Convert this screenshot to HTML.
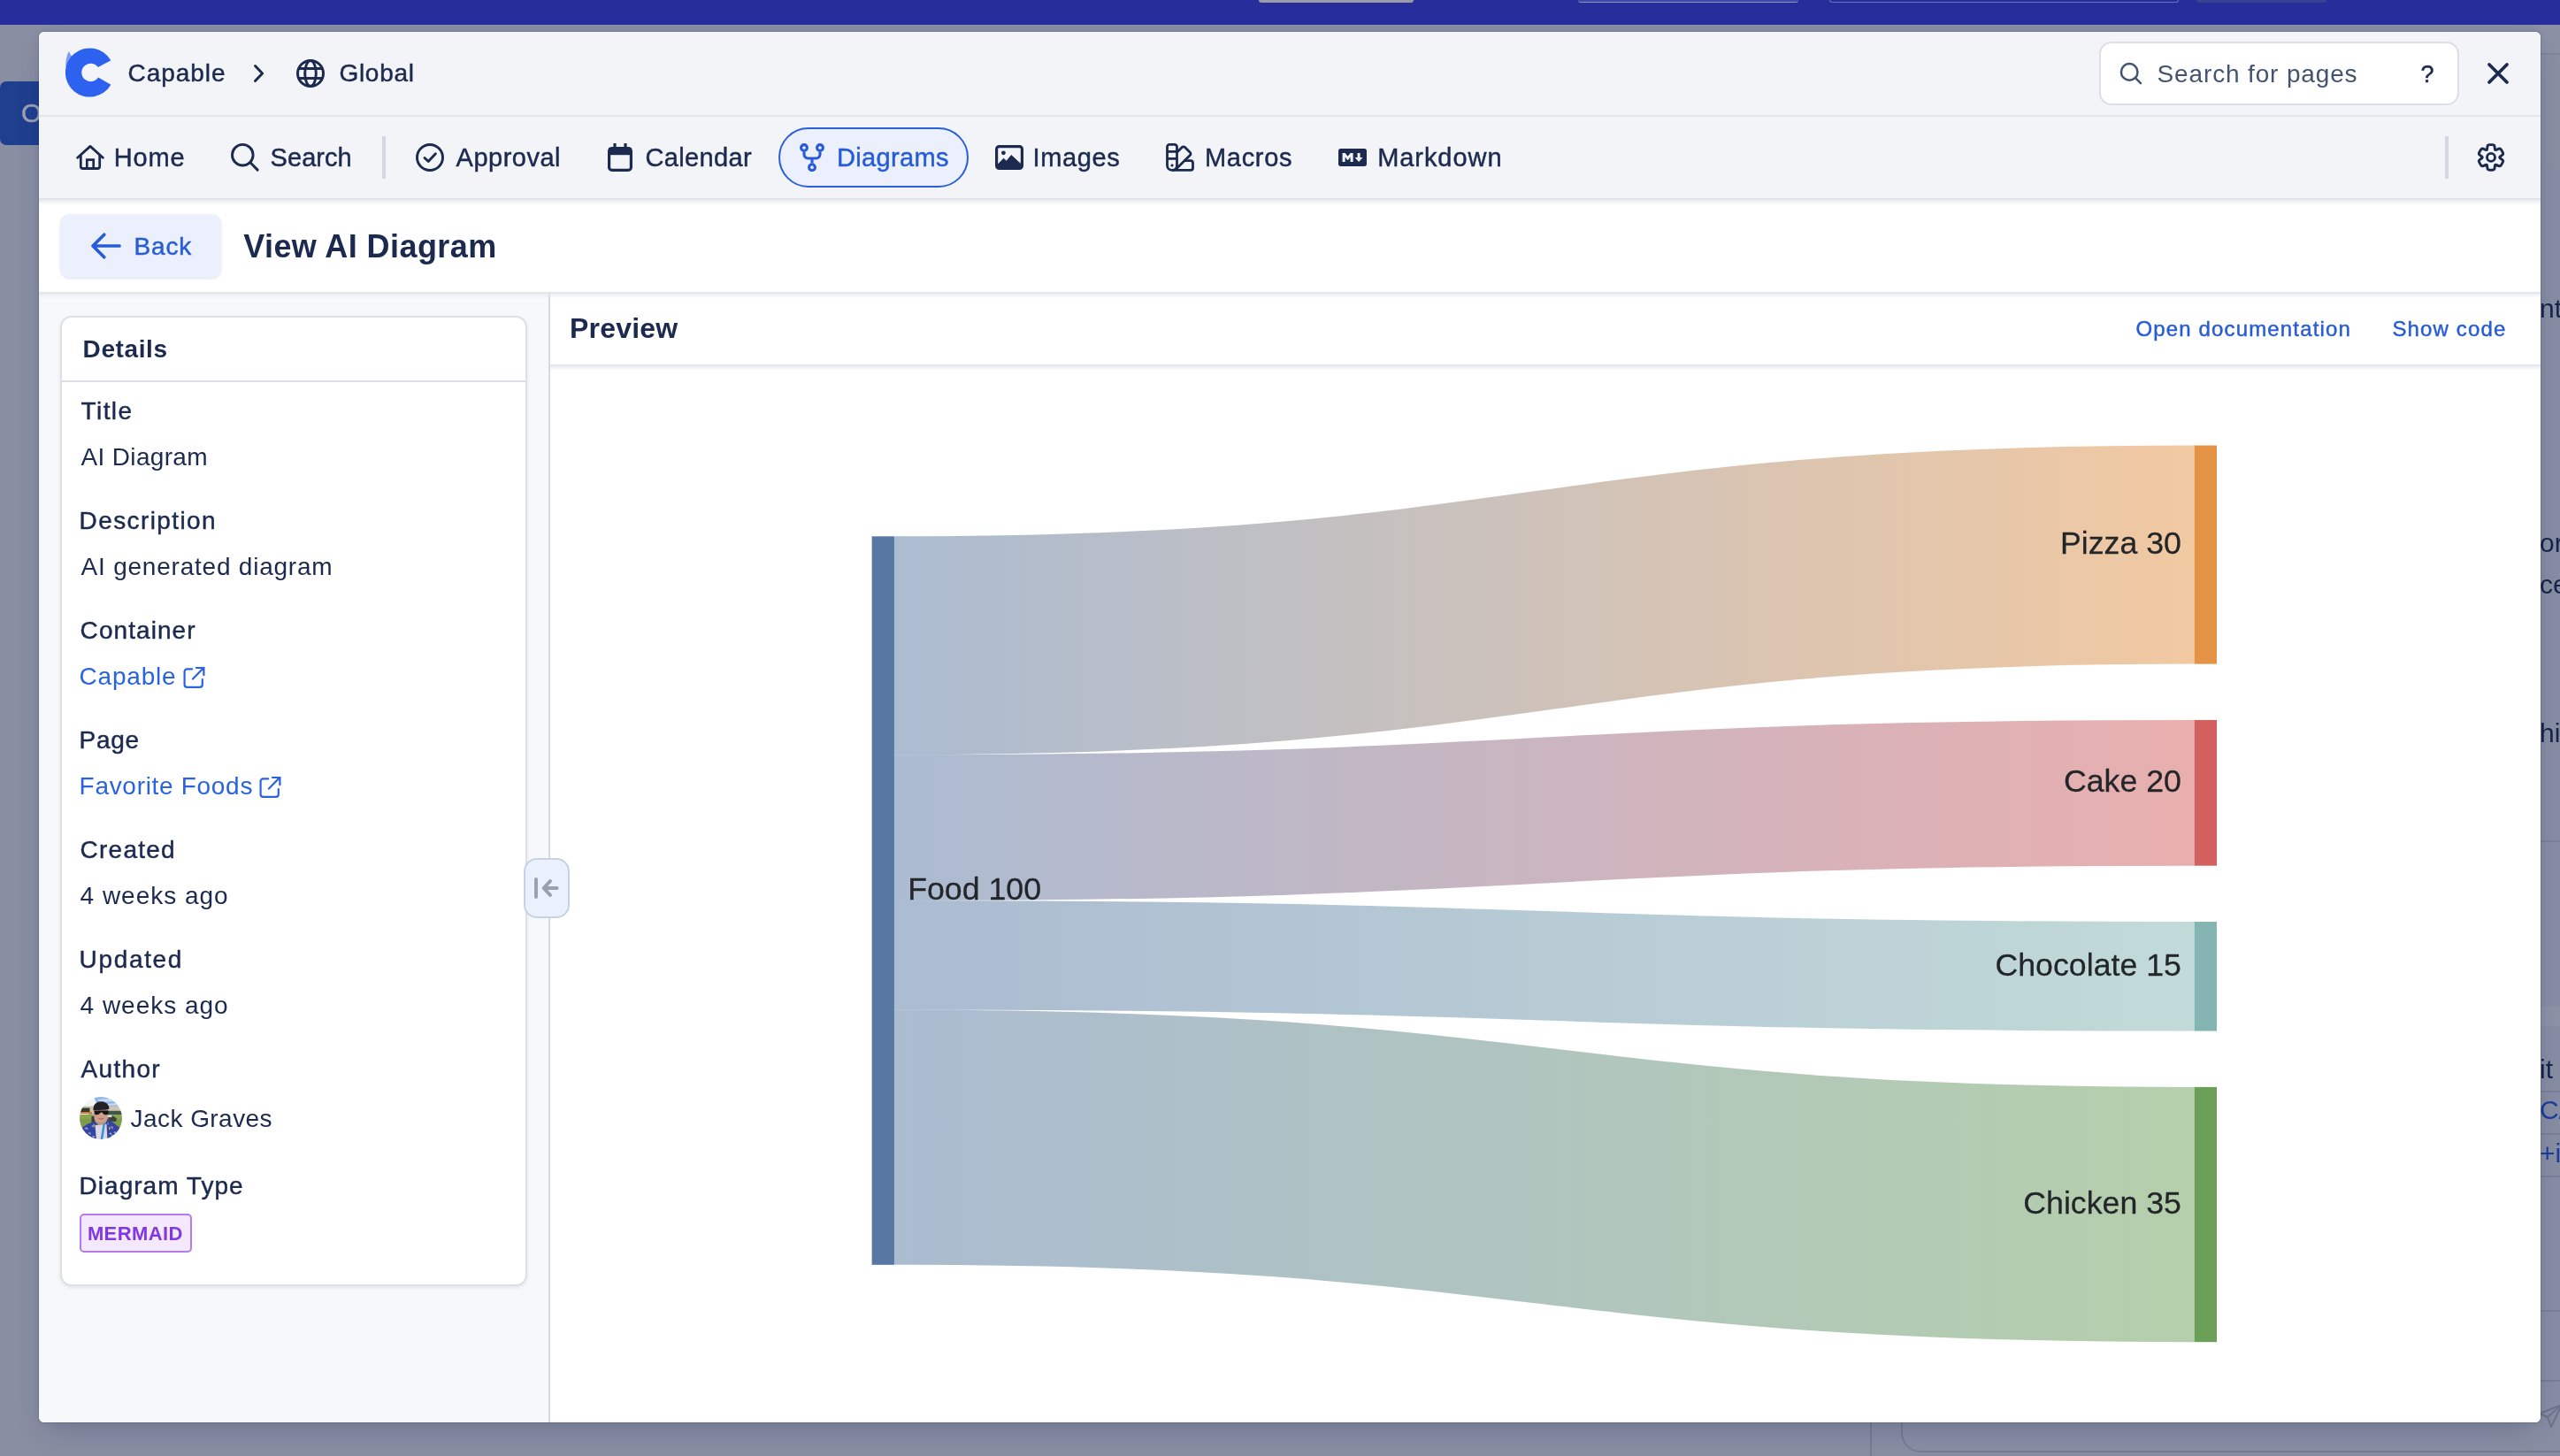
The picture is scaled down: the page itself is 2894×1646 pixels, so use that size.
<!DOCTYPE html><html lang="en"><head><meta charset="utf-8"><title>View AI Diagram</title><style>
*{box-sizing:border-box}
html,body{margin:0;padding:0}
body{width:2894px;height:1646px;background:#898ea3;font-family:'Liberation Sans', sans-serif;}
#root{position:relative;width:2894px;height:1646px;overflow:hidden;background:#898ea3}
.abs{position:absolute}
.t{position:absolute;white-space:pre;font-family:'Liberation Sans', sans-serif;margin:0;padding:0;text-decoration:none;display:block}
.i{position:absolute;display:block}
svg text{font-family:'Liberation Sans', sans-serif;}
#stage{position:absolute;left:-44px;top:-36px;width:2894px;height:1646px}
#modal{position:absolute;left:44px;top:36px;width:2828px;height:1572px;background:#fff;border-radius:6px;overflow:hidden;}
#modalshadow{position:absolute;left:44px;top:36px;width:2828px;height:1572px;border-radius:6px;box-shadow:0 0 0 1px rgba(9,30,66,.12),0 16px 32px -8px rgba(9,30,66,.2),0 0 10px rgba(9,30,66,.07);}
</style></head><body><div id="root">
<div class="abs" style="left:0px;top:0px;width:2894px;height:27.5px;background:#272e9b"></div>
<div class="abs" style="left:1423px;top:0px;width:175px;height:3px;background:#9b9ca8;border-radius:0 0 4px 4px"></div>
<div class="abs" style="left:1784px;top:0px;width:249px;height:3px;background:#3b4aa6;border-bottom:1px solid #8e93bd;border-radius:0 0 4px 4px"></div>
<div class="abs" style="left:2068px;top:0px;width:395px;height:3px;border:1px solid #6a70bb;border-top:0;border-radius:0 0 5px 5px"></div>
<div class="abs" style="left:2483px;top:0px;width:147px;height:3px;background:#3a4391;border-radius:0 0 4px 4px"></div>
<div class="abs" style="left:0px;top:92px;width:60px;height:72px;background:#1f3f8f;border-radius:7px 0 0 7px"></div>
<span class="t" style="left:24px;top:111px;font-size:30px;line-height:34px;color:#9ca1b6;-webkit-text-stroke:0.5px #9ca1b6">Or</span>
<div class="abs" style="left:2872px;top:27.5px;width:22px;height:33px;background:#8b90a5"></div>
<div class="abs" style="left:2872px;top:60px;width:22px;height:2px;background:#80869c"></div>
<div class="abs" style="left:2872px;top:190px;width:22px;height:1456px;background:#878da3"></div>
<span class="t" style="left:2871px;top:332px;font-size:30px;line-height:34px;color:#16254a">nt</span>
<span class="t" style="left:2871px;top:597px;font-size:30px;line-height:34px;color:#16254a">or</span>
<span class="t" style="left:2871px;top:644px;font-size:30px;line-height:34px;color:#16254a">ce</span>
<span class="t" style="left:2871px;top:812px;font-size:30px;line-height:34px;color:#16254a">hi</span>
<span class="t" style="left:2871px;top:1192px;font-size:30px;line-height:34px;color:#16254a">it</span>
<span class="t" style="left:2871px;top:1238px;font-size:30px;line-height:34px;color:#1d3d9a">C/</span>
<span class="t" style="left:2871px;top:1287px;font-size:30px;line-height:34px;color:#1d3d9a">+i</span>
<div class="abs" style="left:2872px;top:1137px;width:22px;height:23px;background:#8d92a7"></div>
<div class="abs" style="left:2872px;top:950px;width:22px;height:2px;background:#7b8198"></div>
<div class="abs" style="left:2872px;top:1233px;width:22px;height:2px;background:#7b8198"></div>
<div class="abs" style="left:2872px;top:1281px;width:22px;height:2px;background:#7b8198"></div>
<div class="abs" style="left:2872px;top:1329px;width:22px;height:2px;background:#7b8198"></div>
<div class="abs" style="left:2872px;top:1481px;width:22px;height:2px;background:#7b8198"></div>
<div class="abs" style="left:2114px;top:1600px;width:2px;height:46px;background:#767d95"></div>
<div class="abs" style="left:2149px;top:1560px;width:860px;height:82px;border:2px solid #767d95;border-radius:22px"></div>
<svg class="i" style="left:2868px;top:1586px" width="30" height="30" viewBox="0 0 30 30"><path d="M28,2 L3,12 L12,16 L16,27 Z M12,16 L28,2" fill="none" stroke="#6d748c" stroke-width="2" stroke-linejoin="round"/></svg>
<div id="modalshadow"></div>
<div id="modal"><div id="stage">
<div class="abs" style="left:44px;top:36px;width:2828px;height:189px;background:#f3f4f7"></div>
<div class="abs" style="left:44px;top:130px;width:2828px;height:2px;background:#e3e5ea"></div>
<div class="abs" style="left:44px;top:224px;width:2828px;height:2px;background:#e1e3e9"></div>
<div class="abs" style="left:44px;top:226px;width:2828px;height:104px;background:#fff;box-shadow:0 1px 0 0 #e3e5ea,0 3px 5px 0 rgba(9,30,66,.08)"></div>
<div class="abs" style="left:44px;top:330px;width:576px;height:1278px;background:#f7f8fa"></div>
<div class="abs" style="left:620px;top:330px;width:2px;height:1278px;background:#d6d9e2"></div>
<svg class="i" style="left:73.8px;top:53.6px" width="56" height="56" viewBox="0 0 56 56" ><path d="M0.2,21.5 C0.2,14 1.5,8 3.8,4 C6,8.5 10,13.5 14.5,17 C8,17.5 3,19 0.2,21.5 Z" fill="#7f9df6"/><path d="M51.40,14.20 A27.6,27.6 0 1 0 51.40,41.80 L37.03,33.50 A10.2,10.2 0 1 1 36.74,22.03 Z" fill="#2d62f0"/></svg>
<span class="t" style="left:144.60px;top:68.65px;font-size:28px;line-height:28px;letter-spacing:0.948px;color:#1b2a4e;font-weight:400;-webkit-text-stroke:0.45px currentColor;">Capable</span>
<svg class="i" style="left:284px;top:70px" width="18" height="26" viewBox="0 0 18 26" ><path d="M4.5,4.5 L12.6,13 L4.5,21.5" fill="none" stroke="#1b2a4e" stroke-width="3" stroke-linecap="round" stroke-linejoin="round"/></svg>
<svg class="i" style="left:335px;top:66.8px" width="32" height="32" viewBox="0 0 32 32" ><circle cx="16" cy="16" r="14.5" fill="none" stroke="#1b2a4e" stroke-width="3"/><ellipse cx="16" cy="16" rx="6.3" ry="14.5" fill="none" stroke="#1b2a4e" stroke-width="3"/><path d="M2.5,10.6 H29.5 M2.5,21.4 H29.5" fill="none" stroke="#1b2a4e" stroke-width="3" stroke-linecap="butt" stroke-linejoin="round"/></svg>
<span class="t" style="left:383.40px;top:68.65px;font-size:28px;line-height:28px;letter-spacing:0.733px;color:#1b2a4e;font-weight:400;-webkit-text-stroke:0.45px currentColor;">Global</span>
<div class="abs" style="left:2373px;top:47px;width:407px;height:72px;background:#fff;border:2px solid #dcdfe6;border-radius:14px"></div>
<svg class="i" style="left:2395px;top:69px" width="28" height="28" viewBox="0 0 28 28" ><circle cx="12.2" cy="12.4" r="9.3" fill="none" stroke="#44546f" stroke-width="2.5"/><path d="M19,19.2 L25,25.2" fill="none" stroke="#44546f" stroke-width="2.5" stroke-linecap="round" stroke-linejoin="round"/></svg>
<span class="t" style="left:2438.60px;top:69.65px;font-size:28px;line-height:28px;letter-spacing:0.850px;color:#44546f;font-weight:400;">Search for pages</span>
<span class="t" style="left:2736.60px;top:70.65px;font-size:27px;line-height:27px;letter-spacing:-4.031px;color:#1b2a4e;font-weight:400;-webkit-text-stroke:0.55px currentColor;">?</span>
<svg class="i" style="left:2810px;top:69px" width="28" height="28" viewBox="0 0 28 28" ><path d="M4,4 L24,24 M24,4 L4,24" fill="none" stroke="#1b2a4e" stroke-width="3.8" stroke-linecap="round" stroke-linejoin="round"/></svg>
<svg class="i" style="left:86px;top:162px" width="32" height="32" viewBox="0 0 32 32" ><path d="M1.7,16.3 L16,3.4 L30.3,16.3" fill="none" stroke="#1b2a4e" stroke-width="2.8" stroke-linecap="round" stroke-linejoin="round"/><path d="M5.3,13.6 V25.9 a2.6,2.6 0 0 0 2.6,2.6 H24.1 a2.6,2.6 0 0 0 2.6,-2.6 V13.6" fill="none" stroke="#1b2a4e" stroke-width="2.8" stroke-linecap="round" stroke-linejoin="round"/><path d="M12.3,28.4 V18.7 H19.7 V28.4" fill="none" stroke="#1b2a4e" stroke-width="2.7" stroke-linecap="butt" stroke-linejoin="miter"/></svg>
<span class="t" style="left:128.75px;top:163.65px;font-size:29px;line-height:29px;letter-spacing:0.814px;color:#1b2a4e;font-weight:400;-webkit-text-stroke:0.45px currentColor;">Home</span>
<svg class="i" style="left:260px;top:161px" width="34" height="34" viewBox="0 0 34 34" ><circle cx="14.3" cy="14.2" r="11.8" fill="none" stroke="#1b2a4e" stroke-width="2.9"/><path d="M22.9,22.8 L31.2,31.1" fill="none" stroke="#1b2a4e" stroke-width="2.9" stroke-linecap="round" stroke-linejoin="round"/></svg>
<span class="t" style="left:305.55px;top:163.65px;font-size:29px;line-height:29px;letter-spacing:0.062px;color:#1b2a4e;font-weight:400;-webkit-text-stroke:0.45px currentColor;">Search</span>
<div class="abs" style="left:432.4px;top:154px;width:3.6px;height:47.5px;background:#d5d7e0"></div>
<svg class="i" style="left:470px;top:162px" width="32" height="32" viewBox="0 0 32 32" ><circle cx="16" cy="16" r="14.5" fill="none" stroke="#1b2a4e" stroke-width="2.9"/><path d="M10,16.5 L14.2,20.5 L22.4,11.8" fill="none" stroke="#1b2a4e" stroke-width="2.9" stroke-linecap="round" stroke-linejoin="round"/></svg>
<span class="t" style="left:515.55px;top:163.65px;font-size:29px;line-height:29px;letter-spacing:0.504px;color:#1b2a4e;font-weight:400;-webkit-text-stroke:0.45px currentColor;">Approval</span>
<svg class="i" style="left:687px;top:162px" width="28" height="32" viewBox="0 0 28 32" ><rect x="1.6" y="5.6" width="24.8" height="24.8" rx="3.2" fill="none" stroke="#1b2a4e" stroke-width="3.2"/><rect x="1" y="5" width="26" height="8.2" fill="#1b2a4e"/><path d="M8,0 V6 M20,0 V6" fill="none" stroke="#1b2a4e" stroke-width="3.2" stroke-linecap="butt" stroke-linejoin="round"/></svg>
<span class="t" style="left:729.55px;top:163.65px;font-size:29px;line-height:29px;letter-spacing:0.330px;color:#1b2a4e;font-weight:400;-webkit-text-stroke:0.45px currentColor;">Calendar</span>
<div class="abs" style="left:880px;top:144px;width:215px;height:68px;background:#ebf0fc;border:2px solid #2a5fdb;border-radius:34px"></div>
<svg class="i" style="left:904px;top:162px" width="28" height="32" viewBox="0 0 28 32" ><circle cx="5" cy="5" r="3.4" fill="none" stroke="#275cd6" stroke-width="3.1"/><circle cx="23" cy="5" r="3.4" fill="none" stroke="#275cd6" stroke-width="3.1"/><circle cx="14" cy="27.2" r="3.4" fill="none" stroke="#275cd6" stroke-width="3.1"/><path d="M5,9.8 V12.6 a4.4,4.4 0 0 0 4.4,4.4 H18.6 a4.4,4.4 0 0 0 4.4,-4.4 V9.8 M14,17 V22.6" fill="none" stroke="#275cd6" stroke-width="3.1" stroke-linecap="butt" stroke-linejoin="round"/></svg>
<span class="t" style="left:945.95px;top:163.65px;font-size:29px;line-height:29px;letter-spacing:0.358px;color:#275cd6;font-weight:400;-webkit-text-stroke:0.45px currentColor;">Diagrams</span>
<svg class="i" style="left:1125px;top:164px" width="32" height="28" viewBox="0 0 32 28" ><rect x="1.6" y="1.6" width="28.8" height="24.8" rx="3" fill="none" stroke="#1b2a4e" stroke-width="3.2"/><circle cx="9.4" cy="8.8" r="2.4" fill="#1b2a4e"/><path d="M3,24.5 L3,22 L9.5,15.2 L12.8,18.2 L18.2,11.6 L29,21.4 L29,24.5 Z" fill="#1b2a4e" stroke="#1b2a4e" stroke-width="1" stroke-linejoin="round"/></svg>
<span class="t" style="left:1167.55px;top:163.65px;font-size:29px;line-height:29px;letter-spacing:0.618px;color:#1b2a4e;font-weight:400;-webkit-text-stroke:0.45px currentColor;">Images</span>
<svg class="i" style="left:1318px;top:162px" width="32" height="32" viewBox="0 0 32 32" ><path d="M1.5,4 a2.6,2.6 0 0 1 2.6,-2.6 h5.8 a2.6,2.6 0 0 1 2.6,2.6 V24.9 a5.5,5.5 0 0 1 -11,0 Z" fill="none" stroke="#1b2a4e" stroke-width="2.8" stroke-linecap="round" stroke-linejoin="round"/><path d="M1.5,9.4 H12.5 M1.5,17.4 H12.5" fill="none" stroke="#1b2a4e" stroke-width="2.8" stroke-linecap="butt" stroke-linejoin="round"/><rect x="5.6" y="23.6" width="2.8" height="2.8" transform="rotate(25 7 25)" fill="#1b2a4e"/><path d="M12.7,10 L18.2,4.5 a2.3,2.3 0 0 1 3.3,0 L27.3,10.3 a2.3,2.3 0 0 1 0,3.3 L11.4,29.2" fill="none" stroke="#1b2a4e" stroke-width="2.8" stroke-linecap="butt" stroke-linejoin="round"/><path d="M20.6,19.6 H27.9 a2.6,2.6 0 0 1 2.6,2.6 V27.8 a2.6,2.6 0 0 1 -2.6,2.6 H7" fill="none" stroke="#1b2a4e" stroke-width="2.8" stroke-linecap="butt" stroke-linejoin="round"/></svg>
<span class="t" style="left:1361.95px;top:163.65px;font-size:29px;line-height:29px;letter-spacing:0.704px;color:#1b2a4e;font-weight:400;-webkit-text-stroke:0.45px currentColor;">Macros</span>
<svg class="i" style="left:1513px;top:168px" width="32" height="20" viewBox="0 0 32 20" ><rect x="0" y="0" width="32" height="20" rx="2.7" fill="#1b2a4e"/><path d="M4.6,15 V5 H7.6 L10.6,8.8 L13.6,5 H16.6 V15 H13.6 V9.6 L10.6,13.3 L7.6,9.6 V15 Z" fill="#f3f4f7"/><path d="M21.6,5 H24.6 V10 H27.6 L23.1,15.1 L18.6,10 H21.6 Z" fill="#f3f4f7"/></svg>
<span class="t" style="left:1557.15px;top:163.65px;font-size:29px;line-height:29px;letter-spacing:0.946px;color:#1b2a4e;font-weight:400;-webkit-text-stroke:0.45px currentColor;">Markdown</span>
<div class="abs" style="left:2764px;top:154px;width:3.8px;height:47.5px;background:#d5d7e0"></div>
<svg class="i" style="left:2800px;top:162px" width="32" height="32" viewBox="0 0 32 32" ><path d="M11.60,6.56 Q11.75,5.11 11.96,3.36 L11.96,3.36 Q12.17,1.60 14.37,1.60 L17.63,1.60 Q19.83,1.60 20.04,3.36 L20.04,3.36 Q20.25,5.11 20.40,6.56 L20.40,6.56 Q20.55,8.02 21.89,7.42 L21.89,7.42 Q23.22,6.82 24.84,6.13 L24.84,6.13 Q26.47,5.43 27.57,7.34 L29.20,10.16 Q30.30,12.07 28.88,13.13 L28.88,13.13 Q27.47,14.19 26.29,15.04 L26.29,15.04 Q25.10,15.90 26.29,16.76 L26.29,16.76 Q27.47,17.61 28.88,18.67 L28.88,18.67 Q30.30,19.73 29.20,21.64 L27.57,24.46 Q26.47,26.37 24.84,25.67 L24.84,25.67 Q23.22,24.98 21.89,24.38 L21.89,24.38 Q20.55,23.78 20.40,25.24 L20.40,25.24 Q20.25,26.69 20.04,28.44 L20.04,28.44 Q19.83,30.20 17.63,30.20 L14.37,30.20 Q12.17,30.20 11.96,28.44 L11.96,28.44 Q11.75,26.69 11.60,25.24 L11.60,25.24 Q11.45,23.78 10.11,24.38 L10.11,24.38 Q8.78,24.98 7.16,25.67 L7.16,25.67 Q5.53,26.37 4.43,24.46 L2.80,21.64 Q1.70,19.73 3.12,18.67 L3.12,18.67 Q4.53,17.61 5.71,16.76 L5.71,16.76 Q6.90,15.90 5.71,15.04 L5.71,15.04 Q4.53,14.19 3.12,13.13 L3.12,13.13 Q1.70,12.07 2.80,10.16 L4.43,7.34 Q5.53,5.43 7.16,6.13 L7.16,6.13 Q8.78,6.82 10.11,7.42 L10.11,7.42 Q11.45,8.02 11.60,6.56 Z" fill="none" stroke="#1b2a4e" stroke-width="2.9" stroke-linecap="round" stroke-linejoin="round"/><circle cx="16" cy="15.9" r="4.5" fill="none" stroke="#1b2a4e" stroke-width="2.9"/></svg>
<div class="abs" style="left:68px;top:242px;width:182px;height:72px;background:#ebf0fc;border-radius:11px;box-shadow:0 1px 3px rgba(9,30,66,.13)"></div>
<svg class="i" style="left:100px;top:262px" width="40" height="32" viewBox="0 0 40 32" ><path d="M35,16 H5 M17.8,3.3 L5,16 L17.8,28.7" fill="none" stroke="#275cd6" stroke-width="3.7" stroke-linecap="round" stroke-linejoin="round"/></svg>
<span class="t" style="left:151.60px;top:264.65px;font-size:28px;line-height:28px;letter-spacing:0.783px;color:#275cd6;font-weight:400;-webkit-text-stroke:0.45px currentColor;">Back</span>
<h1 class="t" style="left:275.20px;top:260.65px;font-size:36px;line-height:36px;letter-spacing:0.421px;color:#1b2a4e;font-weight:700;">View AI Diagram</h1>
<div class="abs" style="left:68px;top:357px;width:528px;height:1097px;background:#fff;border:2px solid #dcdfe6;border-radius:13px;box-shadow:0 2px 4px rgba(9,30,66,.08)"></div>
<div class="abs" style="left:70px;top:429.5px;width:524px;height:2px;background:#dcdfe6"></div>
<h2 class="t" style="left:93.60px;top:380.65px;font-size:28px;line-height:28px;letter-spacing:0.595px;color:#1b2a4e;font-weight:700;">Details</h2>
<label class="t" style="left:91.60px;top:450.65px;font-size:28px;line-height:28px;letter-spacing:1.385px;color:#1b2a4e;font-weight:400;-webkit-text-stroke:0.45px currentColor;">Title</label>
<span class="t" style="left:91.60px;top:502.65px;font-size:28px;line-height:28px;letter-spacing:0.328px;color:#1b2a4e;font-weight:400;">AI Diagram</span>
<label class="t" style="left:89.60px;top:574.65px;font-size:28px;line-height:28px;letter-spacing:1.394px;color:#1b2a4e;font-weight:400;-webkit-text-stroke:0.45px currentColor;">Description</label>
<span class="t" style="left:91.60px;top:626.65px;font-size:28px;line-height:28px;letter-spacing:0.775px;color:#1b2a4e;font-weight:400;">AI generated diagram</span>
<label class="t" style="left:90.60px;top:698.65px;font-size:28px;line-height:28px;letter-spacing:1.074px;color:#1b2a4e;font-weight:400;-webkit-text-stroke:0.45px currentColor;">Container</label>
<a href="#" class="t" style="left:89.60px;top:750.65px;font-size:28px;line-height:28px;letter-spacing:0.781px;color:#2a63e0;font-weight:400;">Capable</a>
<label class="t" style="left:89.60px;top:822.65px;font-size:28px;line-height:28px;letter-spacing:0.731px;color:#1b2a4e;font-weight:400;-webkit-text-stroke:0.45px currentColor;">Page</label>
<a href="#" class="t" style="left:89.60px;top:874.65px;font-size:28px;line-height:28px;letter-spacing:0.696px;color:#2a63e0;font-weight:400;">Favorite Foods</a>
<label class="t" style="left:90.60px;top:946.65px;font-size:28px;line-height:28px;letter-spacing:1.229px;color:#1b2a4e;font-weight:400;-webkit-text-stroke:0.45px currentColor;">Created</label>
<span class="t" style="left:90.60px;top:998.65px;font-size:28px;line-height:28px;letter-spacing:0.978px;color:#1b2a4e;font-weight:400;">4 weeks ago</span>
<label class="t" style="left:89.60px;top:1070.65px;font-size:28px;line-height:28px;letter-spacing:1.654px;color:#1b2a4e;font-weight:400;-webkit-text-stroke:0.45px currentColor;">Updated</label>
<span class="t" style="left:90.60px;top:1122.65px;font-size:28px;line-height:28px;letter-spacing:0.978px;color:#1b2a4e;font-weight:400;">4 weeks ago</span>
<label class="t" style="left:91.60px;top:1194.65px;font-size:28px;line-height:28px;letter-spacing:1.300px;color:#1b2a4e;font-weight:400;-webkit-text-stroke:0.45px currentColor;">Author</label>
<span class="t" style="left:147.60px;top:1250.65px;font-size:28px;line-height:28px;letter-spacing:0.439px;color:#1b2a4e;font-weight:400;">Jack Graves</span>
<label class="t" style="left:89.60px;top:1326.65px;font-size:28px;line-height:28px;letter-spacing:1.018px;color:#1b2a4e;font-weight:400;-webkit-text-stroke:0.45px currentColor;">Diagram Type</label>
<svg class="i" style="left:207px;top:754px" width="26" height="26" viewBox="0 0 26 26" ><path d="M10.2,2.4 H4.5 a2.9,2.9 0 0 0 -2.9,2.9 V19.9 a2.9,2.9 0 0 0 2.9,2.9 H18.9 a2.9,2.9 0 0 0 2.9,-2.9 V14" fill="none" stroke="#2a63e0" stroke-width="2.2" stroke-linecap="round" stroke-linejoin="round"/><path d="M11,13.6 L23.2,0.9 M15,0.9 H23.4 V9.2" fill="none" stroke="#2a63e0" stroke-width="2.2" stroke-linecap="round" stroke-linejoin="miter"/></svg>
<svg class="i" style="left:293px;top:878px" width="26" height="26" viewBox="0 0 26 26" ><path d="M10.2,2.4 H4.5 a2.9,2.9 0 0 0 -2.9,2.9 V19.9 a2.9,2.9 0 0 0 2.9,2.9 H18.9 a2.9,2.9 0 0 0 2.9,-2.9 V14" fill="none" stroke="#2a63e0" stroke-width="2.2" stroke-linecap="round" stroke-linejoin="round"/><path d="M11,13.6 L23.2,0.9 M15,0.9 H23.4 V9.2" fill="none" stroke="#2a63e0" stroke-width="2.2" stroke-linecap="round" stroke-linejoin="miter"/></svg>
<svg class="i" style="left:90px;top:1240px" width="48" height="48" viewBox="0 0 48 48"><defs><clipPath id="avc"><circle cx="24" cy="24" r="24"/></clipPath><filter id="avb" x="-10%" y="-10%" width="120%" height="120%"><feGaussianBlur stdDeviation="0.55"/></filter></defs><g clip-path="url(#avc)"><g filter="url(#avb)"><rect x="-2" y="-2" width="52" height="52" fill="#8fb5e8"/><path d="M-2,-2 H15 L20,9 L17,14 H-2 Z" fill="#f3f3f4"/><path d="M20,3 L34,2 L40,5 L24,6 Z M28,8 L44,7 L46,9 L30,10 Z" fill="#c9daf2"/><rect x="-2" y="10.5" width="52" height="9" fill="#cdc4b4"/><rect x="-2" y="12.5" width="13.5" height="6.5" fill="#2f3a33"/><rect x="-2" y="17" width="16" height="2.4" fill="#d27a2a"/><rect x="0" y="19" width="10" height="2.2" fill="#e9e9ea"/><rect x="31" y="15.8" width="19" height="4.6" fill="#43544a"/><rect x="-2" y="20" width="52" height="30" fill="#7e9b49"/><rect x="-2" y="20" width="52" height="5" fill="#88a554"/><path d="M32,21.5 L37,21 L42,24.5 L41,28 L33,27.5 Z" fill="#3b3f3b"/><rect x="31.5" y="20.5" width="5" height="2.6" fill="#d9dadb"/><rect x="13.5" y="22" width="4" height="8" fill="#3a3d3c"/><path d="M1,37 C6,31 12,29.5 17.5,27.5 L22,33 L29,32 L31,24.5 C36,28 42,31 47,37 L44,50 H4 Z" fill="#36459f"/><path d="M5,36 l3,-2 l2,3 Z M9,41 l3,-1 l1,3 Z M13,33 l2.5,-1 l1,3 Z M35,33 l3,1 l-1,3 Z M38,40 l3,-1 l0,3 Z M33,42 l2,-2 l2,3 Z M14,44 l3,0 l-1,3 Z M31,29 l2,1 l-1,2 Z" fill="#8ea2e6"/><path d="M33,34 l1.6,0 l0,3 l-1.6,0 Z M36,43 l1.6,0 l0,2.6 l-1.6,0 Z M15.5,31 l1.4,0 l0,2.4 l-1.4,0 Z" fill="#c9a73a"/><path d="M17.5,32 L30.5,31 L31.5,50 H19 Z" fill="#dad9e4"/><path d="M26.6,29.5 L29,30 L26,50 L23.4,50 Z" fill="#3f8fdc"/><path d="M16.5,14 H31.5 L31.5,24 C31,28.5 27.5,31.2 24,31.2 C20.5,31.2 17,28.5 16.5,24 Z" fill="#cf9f8b"/><path d="M18.5,26.5 C21,30.8 27,30.8 29.5,26.5 C28,31.5 20,31.5 18.5,26.5 Z" fill="#93705f"/><path d="M21.5,24.3 C23,25.3 25.5,25.3 27,24.3" fill="none" stroke="#a9584a" stroke-width="1"/><path d="M15.5,15.2 C14.8,8 20,4.8 25,5.2 C30.5,5.6 33.6,9.5 33.4,13.2 C31.5,15.4 20,14.6 15.5,15.2 Z" fill="#212128"/><path d="M16.3,15.4 H32.8 L32.4,19.2 C31.5,20.8 27.5,20.8 26.3,18.4 L25.2,17.4 H24 L22.9,18.6 C21.5,20.9 17.5,20.6 16.8,19 Z" fill="#121216"/></g></g></svg>
<div class="abs" style="left:90px;top:1372px;width:127px;height:43.5px;background:#f4e8fd;border:2px solid #b57bee;border-radius:5px"></div>
<span class="t" style="left:98.90px;top:1383.65px;font-size:22px;line-height:22px;letter-spacing:0.398px;color:#8238e0;font-weight:700;">MERMAID</span>
<div class="abs" style="left:622px;top:330px;width:2250px;height:1278px;background:#fff"></div>
<div class="abs" style="left:622px;top:336px;width:2250px;height:76px;background:#fff"></div>
<div class="abs" style="left:622px;top:412px;width:2250px;height:7px;background:linear-gradient(#e2e5eb 0,#e2e5eb 1px,rgba(228,231,237,.75) 2px,rgba(240,242,246,0) 100%)"></div>
<h2 class="t" style="left:644.00px;top:355.15px;font-size:32px;line-height:32px;letter-spacing:0.205px;color:#1b2a4e;font-weight:700;">Preview</h2>
<a href="#" class="t" style="left:2414.40px;top:359.65px;font-size:24px;line-height:24px;letter-spacing:1.151px;color:#275cd6;font-weight:400;-webkit-text-stroke:0.45px currentColor;">Open documentation</a>
<a href="#" class="t" style="left:2704.40px;top:359.65px;font-size:24px;line-height:24px;letter-spacing:1.156px;color:#275cd6;font-weight:400;-webkit-text-stroke:0.45px currentColor;">Show code</a>
<svg class="i" style="left:985px;top:503px;overflow:visible" width="1520.4" height="1013.6" viewBox="0 0 600 400"><g transform="translate(0.2368,0.2170)"><defs><linearGradient id="lg0" gradientUnits="userSpaceOnUse" x1="10" x2="590"><stop offset="0" stop-color="#5878a3"/><stop offset="1" stop-color="#e49345"/></linearGradient><linearGradient id="lg1" gradientUnits="userSpaceOnUse" x1="10" x2="590"><stop offset="0" stop-color="#5878a3"/><stop offset="1" stop-color="#d35f5e"/></linearGradient><linearGradient id="lg2" gradientUnits="userSpaceOnUse" x1="10" x2="590"><stop offset="0" stop-color="#5878a3"/><stop offset="1" stop-color="#85b5b2"/></linearGradient><linearGradient id="lg3" gradientUnits="userSpaceOnUse" x1="10" x2="590"><stop offset="0" stop-color="#5878a3"/><stop offset="1" stop-color="#6b9f58"/></linearGradient></defs><g style="mix-blend-mode:multiply"><path d="M10,89.300 C300,89.300 300,48.750 590,48.750" fill="none" stroke="url(#lg0)" stroke-width="97.500" stroke-opacity="0.5"/><path d="M10,170.550 C300,170.550 300,155.000 590,155.000" fill="none" stroke="url(#lg1)" stroke-width="65.000" stroke-opacity="0.5"/><path d="M10,227.425 C300,227.425 300,236.875 590,236.875" fill="none" stroke="url(#lg2)" stroke-width="48.750" stroke-opacity="0.5"/><path d="M10,308.675 C300,308.675 300,343.125 590,343.125" fill="none" stroke="url(#lg3)" stroke-width="113.750" stroke-opacity="0.5"/></g><rect x="0" y="40.55" width="10" height="325.00" fill="#5878a3"/><rect x="590" y="0.00" width="10" height="97.50" fill="#e49345"/><rect x="590" y="122.50" width="10" height="65.00" fill="#d35f5e"/><rect x="590" y="212.50" width="10" height="48.75" fill="#85b5b2"/><rect x="590" y="286.25" width="10" height="113.75" fill="#6b9f58"/><text x="16" y="202.70" font-size="14.1" text-anchor="start" fill="#232629" stroke="#232629" stroke-width="0.1">Food 100</text><text x="584.2" y="48.40" font-size="14.1" text-anchor="end" fill="#232629" stroke="#232629" stroke-width="0.1">Pizza 30</text><text x="584.2" y="154.65" font-size="14.1" text-anchor="end" fill="#232629" stroke="#232629" stroke-width="0.1">Cake 20</text><text x="584.2" y="236.53" font-size="14.1" text-anchor="end" fill="#232629" stroke="#232629" stroke-width="0.1">Chocolate 15</text><text x="584.2" y="342.77" font-size="14.1" text-anchor="end" fill="#232629" stroke="#232629" stroke-width="0.1">Chicken 35</text></g></svg>
<div class="abs" style="left:44px;top:330px;width:2828px;height:7px;background:linear-gradient(#e2e5eb 0,#e2e5eb 1px,rgba(228,231,237,.75) 2px,rgba(240,242,246,0) 100%)"></div>
<div class="abs" style="left:44px;top:226px;width:2828px;height:6px;background:linear-gradient(rgba(228,231,237,.8) 0,rgba(240,242,246,0) 100%)"></div>
<div class="abs" style="left:592px;top:970.2px;width:52px;height:67.4px;background:#ebf1fc;border:2px solid #c8d1e3;border-radius:15px"></div>
<svg class="i" style="left:600px;top:988px" width="36" height="32" viewBox="0 0 36 32" ><path d="M6,6 V26 M29.7,16 H15 M22,8.1 L14.6,16 L22,23.9" fill="none" stroke="#9aa1ae" stroke-width="3.9" stroke-linecap="round" stroke-linejoin="round"/></svg>
</div></div>
</div></body></html>
